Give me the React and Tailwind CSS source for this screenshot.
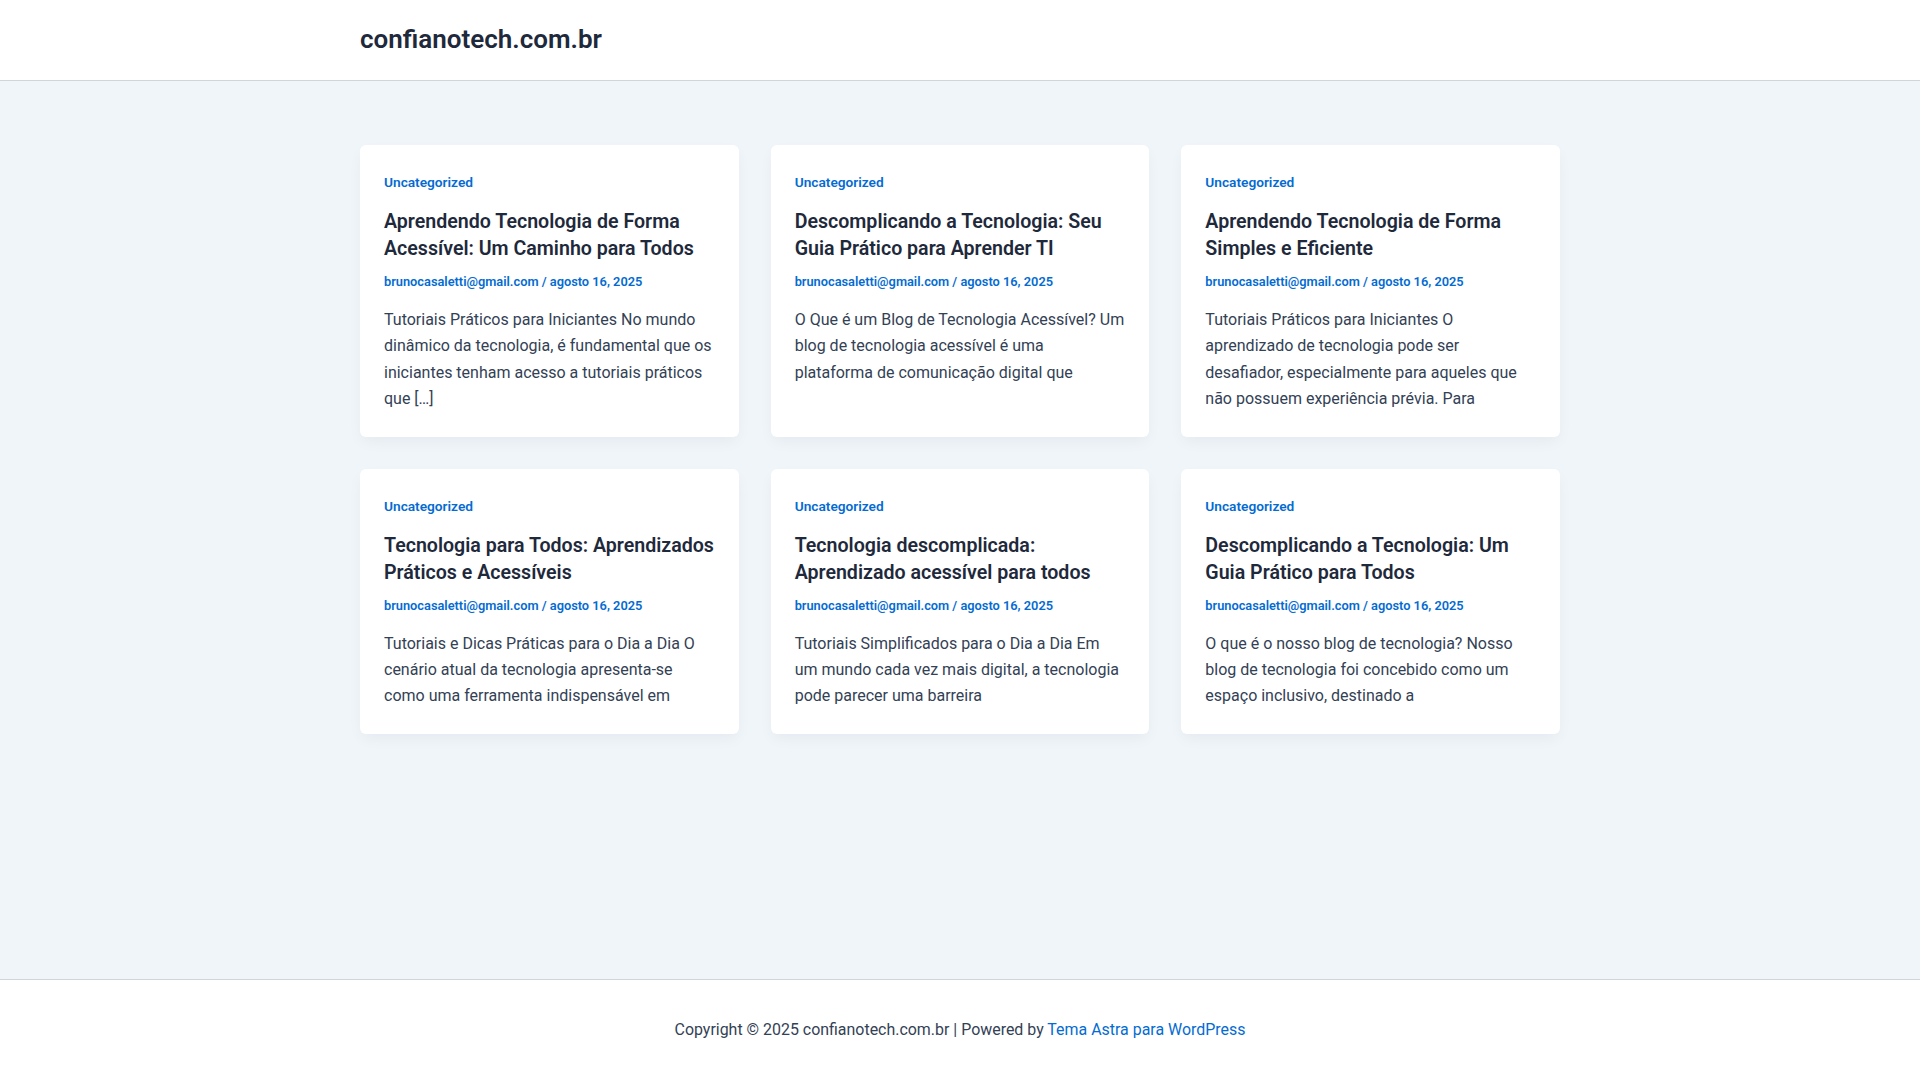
const posts = [
  {
    title: 'Aprendendo Tecnologia de Forma Acessível: Um Caminho para Todos',
    excerpt:
      'Tutoriais Práticos para Iniciantes No mundo dinâmico da tecnologia, é fundamental que os iniciantes tenham acesso a tutoriais práticos que […]',
  },
  {
    title: 'Descomplicando a Tecnologia: Seu Guia Prático para Aprender TI',
    excerpt:
      'O Que é um Blog de Tecnologia Acessível? Um blog de tecnologia acessível é uma plataforma de comunicação digital que',
  },
  {
    title: 'Aprendendo Tecnologia de Forma Simples e Eficiente',
    excerpt:
      'Tutoriais Práticos para Iniciantes O aprendizado de tecnologia pode ser desafiador, especialmente para aqueles que não possuem experiência prévia. Para',
  },
  {
    title: 'Tecnologia para Todos: Aprendizados Práticos e Acessíveis',
    excerpt:
      'Tutoriais e Dicas Práticas para o Dia a Dia O cenário atual da tecnologia apresenta-se como uma ferramenta indispensável em',
  },
  {
    title: 'Tecnologia descomplicada: Aprendizado acessível para todos',
    excerpt:
      'Tutoriais Simplificados para o Dia a Dia Em um mundo cada vez mais digital, a tecnologia pode parecer uma barreira',
  },
  {
    title: 'Descomplicando a Tecnologia: Um Guia Prático para Todos',
    excerpt:
      'O que é o nosso blog de tecnologia? Nosso blog de tecnologia foi concebido como um espaço inclusivo, destinado a',
  },
]

function PostCard({ post }) {
  return (
    <article className="bg-white rounded-md px-6 pt-[25px] pb-[24px] shadow-[0_6px_15px_-2px_rgba(16,24,40,0.05)]">
      <a href="#" className="block text-[13.7px] leading-[24px] font-semibold text-[#046bd2]">
        Uncategorized
      </a>
      <h2 className="mt-[14px] text-[19.6px] leading-[27px] font-semibold text-[#1e293b]">
        {post.title}
      </h2>
      <div className="mt-[10px] text-[12.8px] leading-[20px] font-semibold text-[#046bd2]">
        brunocasaletti@gmail.com / agosto 16, 2025
      </div>
      <p className="mt-[15px] text-[16px] leading-[26.4px] text-[#334155]">{post.excerpt}</p>
    </article>
  )
}

export default function App() {
  return (
    <div className="min-h-screen flex flex-col bg-[#f0f5fa] font-['Roboto',sans-serif]">
      <header className="bg-white border-b border-[#d1d5db] h-[81px] flex items-center">
        <div className="w-[1200px] mx-auto pb-[2px]">
          <a href="#" className="text-[26px] font-semibold text-[#1e293b]">
            confianotech.com.br
          </a>
        </div>
      </header>

      <main className="flex-1 pt-16 pb-16">
        <div className="w-[1200px] mx-auto grid grid-cols-3 gap-8">
          {posts.map((p) => (
            <PostCard key={p.title} post={p} />
          ))}
        </div>
      </main>

      <footer className="bg-white border-t border-[#d1d5db] h-[101px] flex items-center justify-center">
        <p className="text-[15.95px] text-[#334155]">
          Copyright © 2025 confianotech.com.br | Powered by{' '}
          <a href="#" className="text-[#046bd2]">
            Tema Astra para WordPress
          </a>
        </p>
      </footer>
    </div>
  )
}
